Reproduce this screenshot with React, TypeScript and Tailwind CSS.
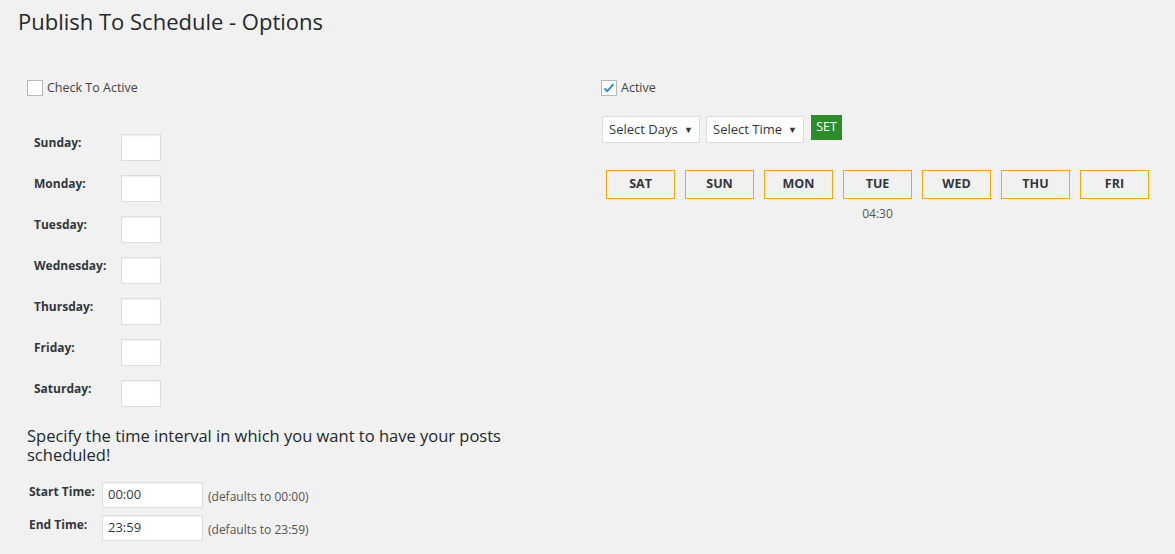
import React from "react";

const days = ["Sunday:", "Monday:", "Tuesday:", "Wednesday:", "Thursday:", "Friday:", "Saturday:"];
const btns = ["SAT", "SUN", "MON", "TUE", "WED", "THU", "FRI"];

export default function App() {
  return (
    <div className="w-[1175px] h-[554px] bg-[#f1f1f1] text-[#444] overflow-hidden" style={{ fontFamily: '"Open Sans", "Noto Sans", sans-serif' }}>
      <h1 className="pl-[18px] pt-[6px] text-[22px] leading-[30px] text-[#23282d] font-normal">Publish To Schedule - Options</h1>
      <div className="flex mt-[44px]">
        <div className="w-[600px] pl-[27px] shrink-0">
          <label className="flex items-center gap-[4px] text-[12.5px] h-[16px]">
            <span className="w-[16px] h-[16px] border border-[#b4b9be] bg-white shrink-0" />
            <span>Check To Active</span>
          </label>
          <div className="mt-[38px] pl-[7px] flex flex-col gap-[14px]">
            {days.map((d) => (
              <div key={d} className="flex items-start h-[27px]">
                <span className="w-[87px] text-[12px] font-bold text-[#32373c]">{d}</span>
                <span className="w-[40px] h-[27px] bg-white border border-[#ddd] shadow-[inset_0_1px_2px_rgba(0,0,0,0.07)]" />
              </div>
            ))}
          </div>
          <p className="mt-[19px] w-[530px] text-[16.5px] leading-[19px] text-[#23282d]">Specify the time interval in which you want to have your posts scheduled!</p>
          <div className="mt-[18px] pl-[2px] flex flex-col gap-[7px]">
            {[["Start Time:", "00:00"], ["End Time:", "23:59"]].map(([l, v]) => (
              <div key={l} className="flex items-start">
                <span className="w-[73px] text-[12px] font-bold text-[#32373c] pt-[1px]">{l}</span>
                <span className="w-[101px] h-[26px] bg-white border border-[#ddd] shadow-[inset_0_1px_2px_rgba(0,0,0,0.07)] text-[13px] text-[#32373c] pl-[5px] flex items-center">{v}</span>
                <span className="ml-[5px] text-[12px] text-[#555] pt-[6px]">(defaults to {v})</span>
              </div>
            ))}
          </div>
        </div>
        <div className="flex-1 pl-[1px]">
          <label className="flex items-center gap-[4px] text-[12.5px] h-[16px]">
            <span className="w-[16px] h-[16px] border border-[#b4b9be] bg-white shrink-0 flex items-center justify-center">
              <svg width="14" height="14" viewBox="0 0 20 20"><path d="M3.5 10.5l4 4 9-10" fill="none" stroke="#1e8cbe" strokeWidth="2.6" /></svg>
            </span>
            <span>Active</span>
          </label>
          <div className="mt-[20px] flex items-start pl-[1px]">
            <div className="w-[98px] h-[27px] bg-white border border-[#ddd] flex items-center justify-between pl-[6px] pr-[6px] text-[13px] text-[#32373c]">
              <span>Select Days</span><span className="text-[9px]">▼</span>
            </div>
            <div className="ml-[6px] w-[98px] h-[27px] bg-white border border-[#ddd] flex items-center justify-between pl-[6px] pr-[6px] text-[13px] text-[#32373c]">
              <span>Select Time</span><span className="text-[9px]">▼</span>
            </div>
            <div className="ml-[7px] -mt-[1px] w-[31px] h-[25px] bg-[#2b8e2b] text-white text-[12.5px] flex items-center justify-center">SET</div>
          </div>
          <div className="mt-[27px] pl-[5px] flex gap-[10px]">
            {btns.map((b) => (
              <div key={b} className="flex flex-col items-center">
                <div className="w-[69px] h-[29px] border border-[#ffa500] flex items-center justify-center text-[12.5px] font-bold text-[#32373c]">{b}</div>
                {b === "TUE" && <div className="mt-[6px] text-[12px] text-[#555]">04:30</div>}
              </div>
            ))}
          </div>
        </div>
      </div>
    </div>
  );
}
